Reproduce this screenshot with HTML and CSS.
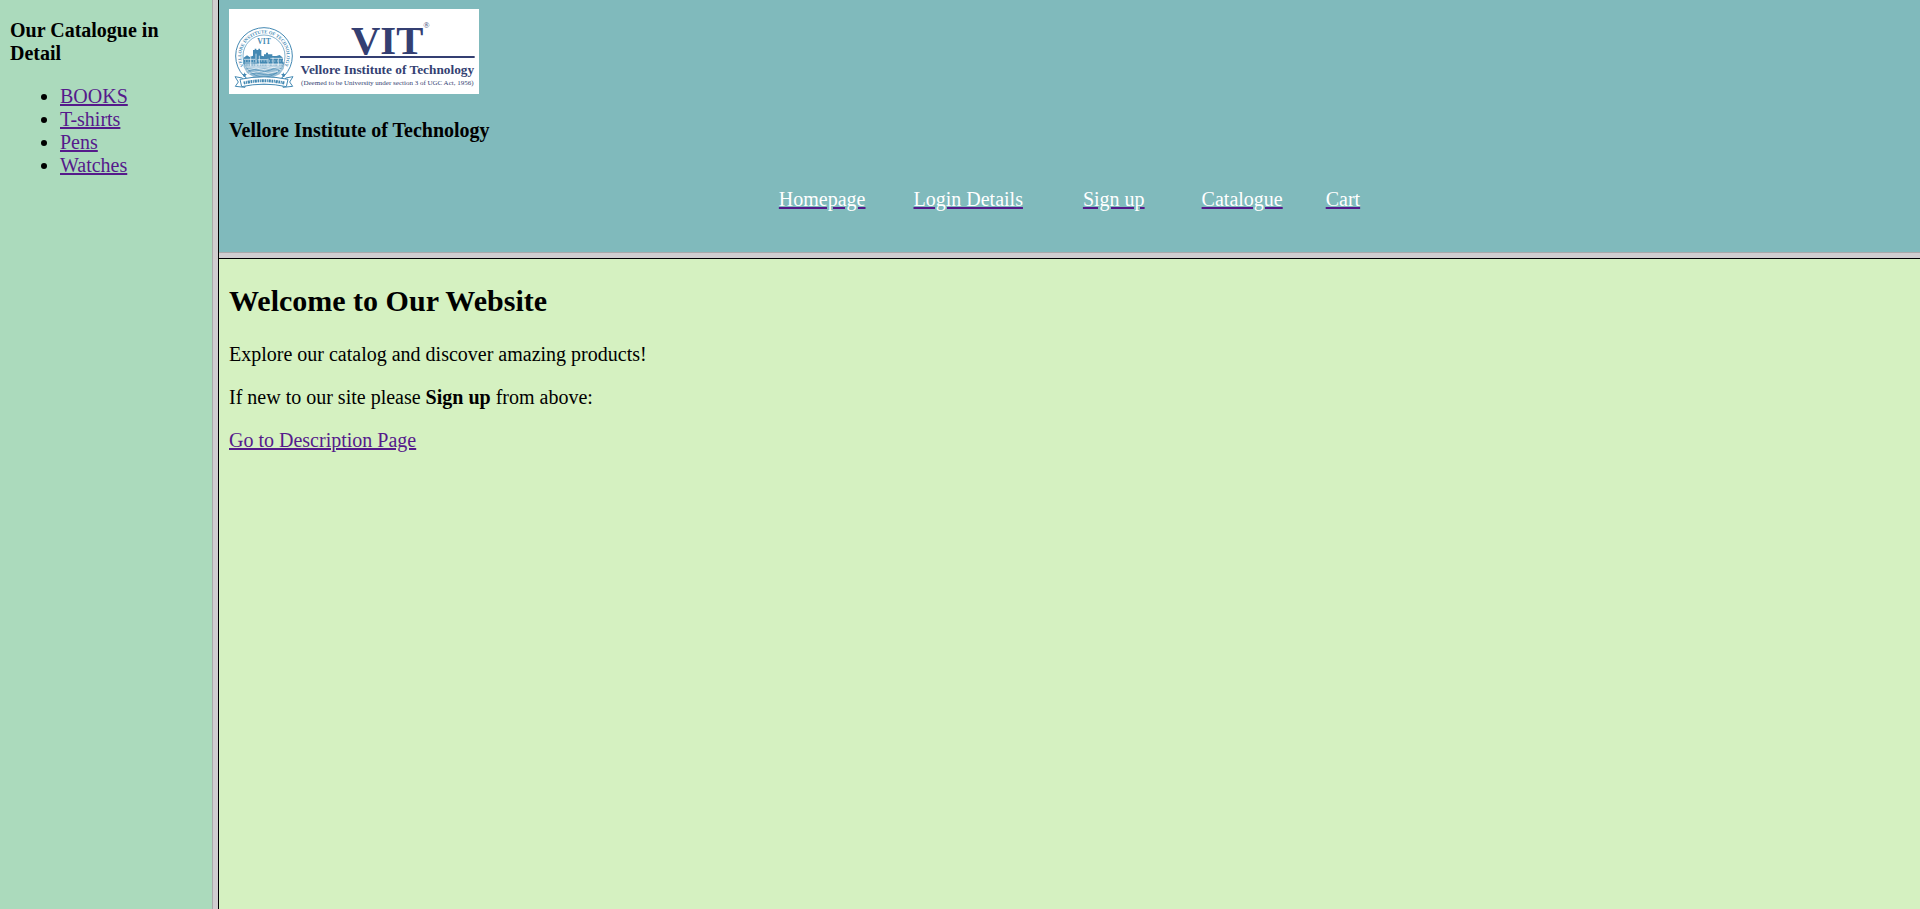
FILE: index.html
```html
<!DOCTYPE html>
<html lang="en">
<head>
<meta charset="utf-8">
<title>Vellore Institute of Technology</title>
<link rel="stylesheet" href="styles.css">
</head>
<body>
<div class="page">
  <aside class="sidebar">
    <h4 class="heading">Our Catalogue in Detail</h4>
    <ul class="catalogue">
      <li><a class="link" href="#books">BOOKS</a></li>
      <li><a class="link" href="#tshirts">T-shirts</a></li>
      <li><a class="link" href="#pens">Pens</a></li>
      <li><a class="link" href="#watches">Watches</a></li>
    </ul>
  </aside>
  <div class="divider divider-vertical"></div>
  <div class="content">
    <header class="banner">
      <svg class="logo" viewBox="0 0 750 255" role="img" aria-label="VIT, Vellore Institute of Technology">
        <rect width="750" height="255" fill="#fff"/>
        <g fill="none" stroke="#4489b3">
          <!-- seal rings -->
          <circle cx="105" cy="141" r="85" stroke-width="3"/>
          <circle cx="105" cy="141" r="63" stroke-width="2"/>
        </g>
        <path id="ring" d="M71 200A68 68 0 1 1 139 200" fill="none"/>
        <text class="logo-ring"><textPath href="#ring" startOffset="50%">VELLORE INSTITUTE OF TECHNOLOGY</textPath></text>
        <g fill="#4489b3">
          <path d="M47 190l2 5 5 0-4 4 1 5-4-3-4 3 1-5-4-4 5 0zM163 190l2 5 5 0-4 4 1 5-4-3-4 3 1-5-4-4 5 0z"/>
          <!-- campus skyline -->
          <path d="M44 146l10-7 8 5 10-4v-17h5v-4h5v4h6v-4h5v4h4v17l8 2v-6h6v-5h6v5h13v5h12l10-3 8 7 2 4v16H43z"/>
          <path opacity=".55" d="M43 160h125l-4 19-12 17-20 9H75l-21-13-10-18z"/>
        </g>
        <g fill="none" stroke="#fff" stroke-width="2">
          <path d="M45 151h34M86 152h30M124 148h37M47 162h30M84 165h76M48 174h112M53 184l28-7 25 5 27-7 24 8M60 193l35-6 22 6 30-6"/>
          <path stroke-dasharray="3 5" d="M48 156h114M48 168h114"/>
          <path d="M65 144v28M81 134v38M91 140v30M117 149v25M132 146v24M148 148v23"/>
        </g>
        <g fill="none" stroke="#4489b3" stroke-width="2">
          <path d="M58 185q20-7 34 0t32-2 27 2M64 195q18-6 34 0t46-3"/>
        </g>
        <!-- motto ribbon -->
        <g fill="#fff" stroke="#4489b3" stroke-width="3">
          <path d="M40 207L18 203l10 16-9 13 29 3v-8zM170 207l22-4-10 16 9 13-29 3v-8z"/>
          <path d="M33 211Q105 196 177 211l-5 22Q105 218 38 233z"/>
        </g>
        <path d="M44 222Q105 208 166 222" fill="none" stroke="#4489b3" stroke-width="9" stroke-dasharray="5 2 3 2 7 2"/>
        <text class="logo-seal" x="105" y="105">VIT</text>
        <text class="logo-mark" x="366" y="134">VIT</text>
        <text class="logo-reg" x="583" y="58">®</text>
        <rect x="213" y="141" width="524" height="6" fill="#343f72"/>
        <text class="logo-name" x="475" y="195">Vellore Institute of Technology</text>
        <text class="logo-note" x="475" y="229">(Deemed to be University under section 3 of UGC Act, 1956)</text>
      </svg>
      <h4 class="heading">Vellore Institute of Technology</h4>
      <nav class="nav">
        <a class="nav-link" href="#home">Homepage</a>
        <a class="nav-link" href="#login">Login Details</a>
        <a class="nav-link" href="#signup">Sign up</a>
        <a class="nav-link" href="#catalogue">Catalogue</a>
        <a class="nav-link" href="#cart">Cart</a>
      </nav>
    </header>
    <div class="divider divider-horizontal"></div>
    <main class="main">
      <h2 class="title">Welcome to Our Website</h2>
      <p class="text">Explore our catalog and discover amazing products!</p>
      <p class="text">If new to our site please <b>Sign up</b> from above:</p>
      <a class="link" href="#description">Go to Description Page</a>
    </main>
  </div>
</div>
</body>
</html>
```
FILE: styles.css
```css
body {
  margin: 0;
  font: 20px/23px "Liberation Serif", serif;
  color: #000;
}

.page {
  display: flex;
  min-height: 100vh;
}

.sidebar {
  box-sizing: border-box;
  flex: 0 0 212px;
  padding: 19px 10px;
  background: #abdabc;
}

.heading {
  margin: 0;
  font-size: 20px;
}

.catalogue {
  margin: 20px 0;
  padding-left: 50px;
}

.link {
  color: #551a8b;
  text-decoration-thickness: 2px;
}

.divider {
  box-sizing: border-box;
  background: #d0cdcf;
}

.divider-vertical {
  flex: 0 0 7px;
  border-left: 1px solid #a9a9a9;
  border-right: 1px solid #000;
}

.divider-horizontal {
  flex: 0 0 7px;
  border-top: 1px solid #a9a9a9;
  border-bottom: 1px solid #000;
}

.content {
  display: flex;
  flex: 1;
  flex-direction: column;
}

.banner {
  padding: 9px 10px 41px;
  background: #80babc;
}

.logo {
  display: block;
  width: 250px;
  margin-bottom: 25px;
}

.logo text {
  text-anchor: middle;
  font-family: "Liberation Serif", serif;
  fill: #343f72;
}

.logo .logo-ring {
  font-size: 14px;
  font-weight: bold;
  fill: #4489b3;
}

.logo .logo-seal {
  font-size: 23px;
  font-weight: bold;
  fill: #4489b3;
}

.logo .logo-mark {
  font-size: 122px;
  font-weight: bold;
  text-anchor: start;
}

.logo .logo-reg {
  font-size: 25px;
  text-anchor: start;
}

.logo .logo-name {
  font-size: 40px;
  font-weight: bold;
}

.logo .logo-note {
  font-size: 21px;
}

.nav {
  display: flex;
  justify-content: center;
  margin-top: 46px;
}

.nav-link {
  color: #fff;
  text-decoration: underline 2px #551a8b;
}

.nav-link:nth-child(2) {
  margin-left: 48px;
}

.nav-link:nth-child(3) {
  margin-left: 60px;
}

.nav-link:nth-child(4) {
  margin-left: 57px;
}

.nav-link:nth-child(5) {
  margin-left: 43px;
}

.main {
  flex: 1;
  padding: 25px 10px;
  background: #d5f1c1;
}

.title {
  margin: 0 0 25px;
  font-size: 30px;
  line-height: 34px;
}

.text {
  margin: 0 0 20px;
}
```
